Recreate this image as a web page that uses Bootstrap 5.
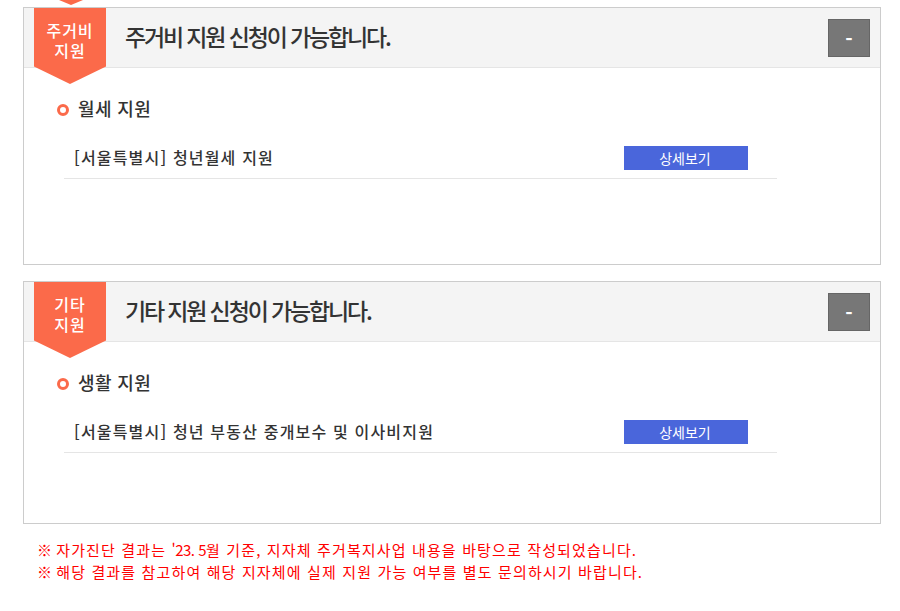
<!DOCTYPE html>
<html lang="ko">
<head>
<meta charset="utf-8">
<title>지원 결과</title>
<link rel="stylesheet" href="https://cdn.jsdelivr.net/npm/bootstrap@5.3.0/dist/css/bootstrap.min.css">
<style>
html,body{height:100%;overflow:hidden}
body{font-family:"Noto Sans CJK KR","Liberation Sans",sans-serif;color:#333;background:#fff}
.page-wrap{position:relative;padding:7px 19px 0 23px}
.prev-tip{position:absolute;left:59px;top:0;width:24px;height:5px;background:#fb6a4a;clip-path:polygon(0 0,100% 0,50% 100%)}
.panel-box{border:1px solid #ccc;margin-bottom:16px;background:#fff}
.panel-a{height:258px}
.panel-b{height:243px;margin-bottom:0}
.panel-head{height:60px;background:#f4f4f4;border-bottom:1px solid #e5e5e5;padding:0 10px 2px 101px;position:relative}
.panel-head .toggle-btn{margin-bottom:-2px}
.ribbon{position:absolute;left:10px;top:0;width:72px;height:76px;background:#fb6a4a;color:#fff;font-size:16px;letter-spacing:1px;line-height:20px;text-align:center;padding-top:12px;clip-path:polygon(0 0,100% 0,100% 77%,50% 100%,0 77%);font-weight:500}
.panel-title{font-size:23px;font-weight:500;letter-spacing:-2.15px;color:#333;margin:0;line-height:1}
.toggle-btn{width:42px;height:38px;background:#777;border:1px solid #666;border-radius:0;color:#fff;font-size:20px;line-height:1;padding:2px 0 0;font-weight:700}
.toggle-btn:hover{background:#777;color:#fff}
.panel-body-area{padding:27px 103px 0 33px}
.section-name{font-size:18px;font-weight:500;color:#333;line-height:26px;margin:0 0 22px;letter-spacing:.4px}
.ring{width:12px;height:12px;border:3.5px solid #fb6a4a;border-radius:50%;display:inline-block;margin-top:3px;margin-right:1px}
.item-row{margin-left:7px;height:36px;border-bottom:1px solid #e5e5e5;padding:3px 29px 8px 10px}
.item-name{font-size:16px;font-weight:500;letter-spacing:1.18px;color:#333;margin-top:-2px}
.view-btn{width:124px;height:24px;background:#4a66db;border:0;border-radius:0;color:#fff;font-size:14px;line-height:24px;padding:0 2px 0 0}
.view-btn:hover{background:#4a66db;color:#fff}
.notes{padding:15px 0 0 14px;color:#f00;font-size:15px;line-height:22px;letter-spacing:1.14px}
.ascii-part{letter-spacing:-.5px}
.note-mark{letter-spacing:0}
</style>
</head>
<body>
<div class="page-wrap">
  <div class="prev-tip"></div>
  <section class="panel-box panel-a">
    <div class="panel-head d-flex align-items-center justify-content-between">
      <div class="ribbon">주거비<br>지원</div>
      <h2 class="panel-title">주거비 지원 신청이 가능합니다.</h2>
      <button class="btn toggle-btn" type="button">-</button>
    </div>
    <div class="panel-body-area">
      <h3 class="section-name d-flex align-items-center gap-2"><span class="ring"></span>월세 지원</h3>
      <div class="item-row d-flex align-items-center justify-content-between">
        <span class="item-name">[서울특별시] 청년월세 지원</span>
        <a class="btn view-btn" href="#">상세보기</a>
      </div>
    </div>
  </section>
  <section class="panel-box panel-b">
    <div class="panel-head d-flex align-items-center justify-content-between">
      <div class="ribbon">기타<br>지원</div>
      <h2 class="panel-title">기타 지원 신청이 가능합니다.</h2>
      <button class="btn toggle-btn" type="button">-</button>
    </div>
    <div class="panel-body-area">
      <h3 class="section-name d-flex align-items-center gap-2"><span class="ring"></span>생활 지원</h3>
      <div class="item-row d-flex align-items-center justify-content-between">
        <span class="item-name">[서울특별시] 청년 부동산 중개보수 및 이사비지원</span>
        <a class="btn view-btn" href="#">상세보기</a>
      </div>
    </div>
  </section>
  <div class="notes">
    <div><span class="note-mark">※ </span>자가진단 결과는 <span class="ascii-part">'23. 5</span>월 기준, 지자체 주거복지사업 내용을 바탕으로 작성되었습니다.</div>
    <div><span class="note-mark">※ </span>해당 결과를 참고하여 해당 지자체에 실제 지원 가능 여부를 별도 문의하시기 바랍니다.</div>
  </div>
</div>
</body>
</html>
